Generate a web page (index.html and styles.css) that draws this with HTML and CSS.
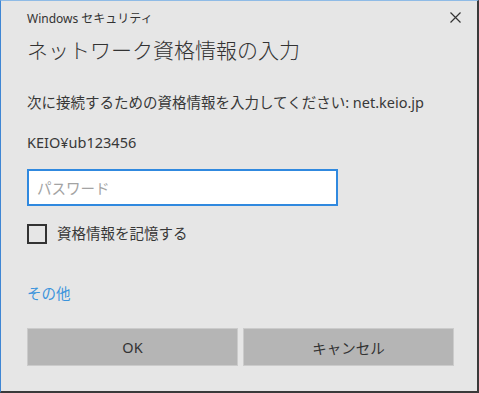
FILE: index.html
```html
<!DOCTYPE html>
<html lang="ja">
<head>
<meta charset="utf-8">
<title>Windows セキュリティ</title>
<link rel="stylesheet" href="styles.css">
</head>
<body>
<div class="window">
  <div class="title-bar">
    <span class="title">Windows セキュリティ</span>
    <svg class="close" width="11" height="11" viewBox="0 0 11 11"><path d="M0.5 0.5 L10.5 10.5 M10.5 0.5 L0.5 10.5" stroke="#333" stroke-width="1.2" fill="none"/></svg>
  </div>
  <h1 class="heading">ネットワーク資格情報の入力</h1>
  <p class="prompt">次に接続するための資格情報を入力してください: net.keio.jp</p>
  <p class="user">KEIO¥ub123456</p>
  <div class="input"><span class="placeholder">パスワード</span></div>
  <div class="check-row">
    <span class="checkbox"></span>
    <span class="check-label">資格情報を記憶する</span>
  </div>
  <div class="link">その他</div>
  <div class="buttons">
    <div class="btn">OK</div>
    <div class="btn">キャンセル</div>
  </div>
</div>
</body>
</html>
```

FILE: styles.css
```css
html, body {
  margin: 0;
  padding: 0;
  background: #e6e6e6;
}
.window {
  box-sizing: border-box;
  width: 479px;
  height: 393px;
  background: #e6e6e6;
  border-top: 1px solid #8fbbe6;
  border-left: 1px solid #3f86d4;
  border-right: 2px solid #3a3a3a;
  border-bottom: 2px solid #3a3a3a;
  padding: 0 16px 0 26px;
  font-family: "Noto Sans", "Noto Sans CJK JP", sans-serif;
  color: #383838;
}
.title-bar {
  height: 33px;
  display: flex;
  align-items: center;
  justify-content: space-between;
}
.title {
  font-size: 12px;
  color: #333;
}
.close {
  display: block;
}
.heading {
  margin: 2px 0 0;
  font-size: 21px;
  line-height: 28px;
  font-weight: 300;
  color: #333;
}
.prompt {
  margin: 28px 0 0;
  font-size: 14.5px;
  line-height: 20px;
}
.user {
  margin: 20px 0 0;
  font-size: 14.5px;
  line-height: 20px;
}
.input {
  box-sizing: border-box;
  margin-top: 17px;
  width: 311px;
  height: 37px;
  background: #fff;
  border: 2px solid #3089df;
  display: flex;
  align-items: center;
  padding-left: 8px;
}
.placeholder {
  font-size: 14.5px;
  color: #a3a3a3;
}
.check-row {
  margin-top: 18px;
  display: flex;
  align-items: center;
  height: 20px;
}
.checkbox {
  box-sizing: border-box;
  width: 20px;
  height: 20px;
  border: 2px solid #333;
  margin-right: 10px;
}
.check-label {
  font-size: 14.5px;
  line-height: 20px;
  margin-top: -2px;
}
.link {
  margin-top: 39px;
  font-size: 14.5px;
  line-height: 20px;
  color: #3b94dc;
}
.buttons {
  margin-top: 25px;
  width: 427px;
  display: grid;
  grid-template-columns: 1fr 1fr;
  column-gap: 5px;
}
.btn {
  box-sizing: border-box;
  height: 38px;
  background: #b5b5b5;
  border: 1px solid #cbcbcb;
  display: flex;
  align-items: center;
  justify-content: center;
  font-size: 14.5px;
  color: #333;
}
```
